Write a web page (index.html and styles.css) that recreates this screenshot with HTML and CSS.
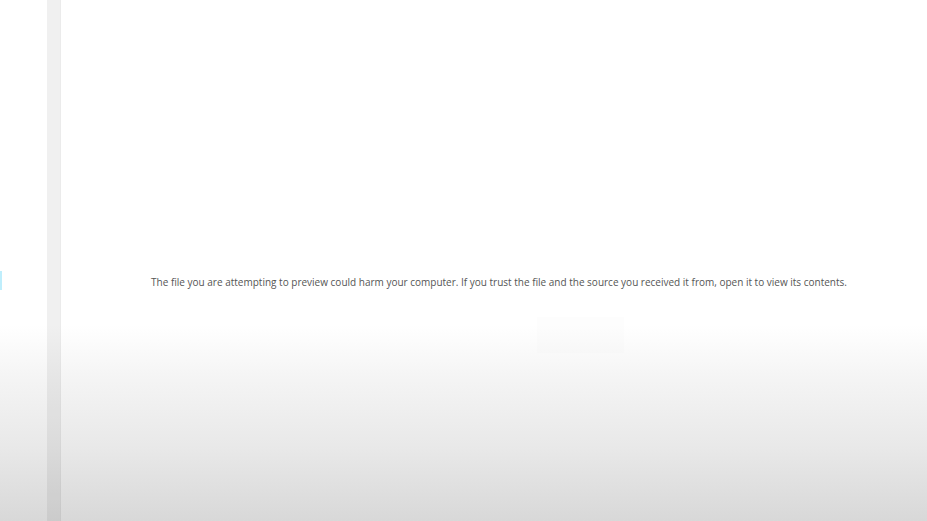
FILE: index.html
```html
<!DOCTYPE html>
<html lang="en">
<head>
  <meta charset="UTF-8">
  <title>Preview</title>
  <link rel="stylesheet" href="styles.css">
</head>
<body>
  <div class="shell">
    <div class="gutter">
      <div class="focus-mark"></div>
    </div>
    <div class="splitter"></div>
    <main class="preview">
      <p class="preview-message">The file you are attempting to preview could harm your computer. If you trust the file and the source you received it from, open it to view its contents.</p>
      <button class="preview-button" type="button"></button>
    </main>
  </div>
</body>
</html>
```

FILE: styles.css
```css
* {
  box-sizing: border-box;
}

html, body {
  height: 100%;
}

body {
  margin: 0;
  font-family: "Open Sans", "DejaVu Sans", sans-serif;
  background: linear-gradient(to bottom, #ffffff 0, #ffffff 325px, #f4f4f4 380px, #e8e8e8 450px, #d8d8d8 521px);
}

.shell {
  display: flex;
  height: 100%;
}

.gutter {
  width: 47px;
  flex-shrink: 0;
  padding-top: 271px;
}

.focus-mark {
  width: 2px;
  height: 19px;
  background: #bfeefc;
}

.splitter {
  width: 14px;
  flex-shrink: 0;
  background: rgba(0, 0, 0, 0.06);
  border-right: 1px solid rgba(0, 0, 0, 0.02);
}

.preview {
  flex: 1;
  display: flex;
  flex-direction: column;
  align-items: center;
  padding-top: 274px;
  padding-left: 10px;
}

.preview-message {
  margin: 0;
  font-size: 10px;
  line-height: 17px;
  color: #555555;
  white-space: nowrap;
}

.preview-button {
  margin-top: 26px;
  margin-left: 162px;
  width: 87px;
  height: 36px;
  border: none;
  background: rgba(0, 0, 0, 0.008);
}
```
